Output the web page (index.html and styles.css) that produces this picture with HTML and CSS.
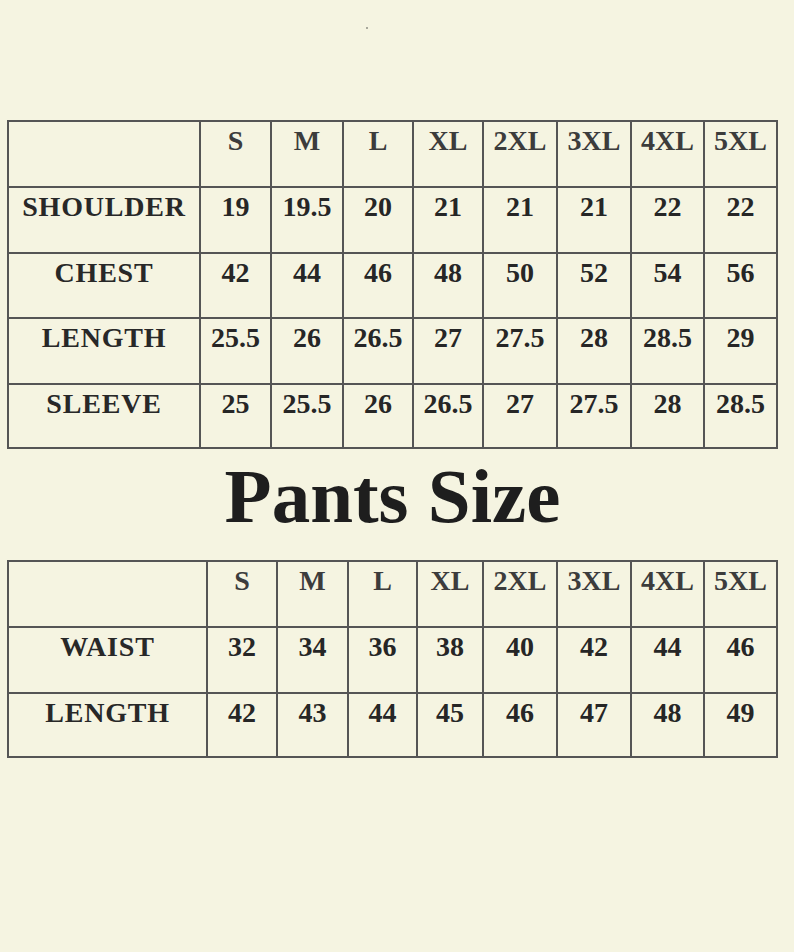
FILE: index.html
```html
<!DOCTYPE html>
<html>
<head>
<meta charset="utf-8">
<link rel="stylesheet" href="styles.css">
</head>
<body>
<div class="page">
  <div class="dot"></div>
  <div class="chart shirt">
    <div class="cell head"></div>
    <div class="cell head">S</div>
    <div class="cell head">M</div>
    <div class="cell head">L</div>
    <div class="cell head">XL</div>
    <div class="cell head">2XL</div>
    <div class="cell head">3XL</div>
    <div class="cell head">4XL</div>
    <div class="cell head">5XL</div>

    <div class="cell label">SHOULDER</div>
    <div class="cell">19</div><div class="cell">19.5</div><div class="cell">20</div><div class="cell">21</div><div class="cell">21</div><div class="cell">21</div><div class="cell">22</div><div class="cell">22</div>

    <div class="cell label">CHEST</div>
    <div class="cell">42</div><div class="cell">44</div><div class="cell">46</div><div class="cell">48</div><div class="cell">50</div><div class="cell">52</div><div class="cell">54</div><div class="cell">56</div>

    <div class="cell label">LENGTH</div>
    <div class="cell">25.5</div><div class="cell">26</div><div class="cell">26.5</div><div class="cell">27</div><div class="cell">27.5</div><div class="cell">28</div><div class="cell">28.5</div><div class="cell">29</div>

    <div class="cell label">SLEEVE</div>
    <div class="cell">25</div><div class="cell">25.5</div><div class="cell">26</div><div class="cell">26.5</div><div class="cell">27</div><div class="cell">27.5</div><div class="cell">28</div><div class="cell">28.5</div>
  </div>

  <h1 class="title">Pants Size</h1>

  <div class="chart pants">
    <div class="cell head"></div>
    <div class="cell head">S</div>
    <div class="cell head">M</div>
    <div class="cell head">L</div>
    <div class="cell head">XL</div>
    <div class="cell head">2XL</div>
    <div class="cell head">3XL</div>
    <div class="cell head">4XL</div>
    <div class="cell head">5XL</div>

    <div class="cell label">WAIST</div>
    <div class="cell">32</div><div class="cell">34</div><div class="cell">36</div><div class="cell">38</div><div class="cell">40</div><div class="cell">42</div><div class="cell">44</div><div class="cell">46</div>

    <div class="cell label">LENGTH</div>
    <div class="cell">42</div><div class="cell">43</div><div class="cell">44</div><div class="cell">45</div><div class="cell">46</div><div class="cell">47</div><div class="cell">48</div><div class="cell">49</div>
  </div>
</div>
</body>
</html>
```
FILE: styles.css
```css
html, body {
  margin: 0;
  padding: 0;
  background: #f5f4e1;
}

body {
  width: 794px;
  height: 952px;
  overflow: hidden;
  font-family: "Liberation Serif", "Times New Roman", serif;
  color: #222;
}

.page {
  padding-left: 7px;
  width: 771px;
}

.dot {
  width: 2px;
  height: 2px;
  margin-left: 359px;
  margin-top: 27px;
  margin-bottom: 91px;
  background: #a8a89c;
}

.chart {
  display: grid;
  border-left: 2px solid #555;
  border-top: 2px solid #555;
  width: 771px;
  box-sizing: border-box;
}

.shirt {
  grid-template-columns: 192px 71px 72px 70px 70px 74px 74px 73px 73px;
  grid-template-rows: 66px 66px 65px 66px 64px;
}

.pants {
  grid-template-columns: 199px 70px 71px 69px 66px 74px 74px 73px 73px;
  grid-template-rows: 66px 66px 64px;
}

.cell {
  box-sizing: border-box;
  border-right: 2px solid #555;
  border-bottom: 2px solid #555;
  padding-top: 3px;
  font-size: 28px;
  line-height: 32px;
  font-weight: bold;
  text-align: center;
  white-space: nowrap;
  color: #262626;
}

.head {
  color: #3c3c3c;
}

.label {
  letter-spacing: 0.8px;
  color: #282828;
}

.title {
  margin: 0;
  height: 111px;
  box-sizing: border-box;
  padding-top: 9px;
  font-size: 77px;
  line-height: 76px;
  font-weight: bold;
  text-align: center;
  color: #1e1e1e;
}
```
